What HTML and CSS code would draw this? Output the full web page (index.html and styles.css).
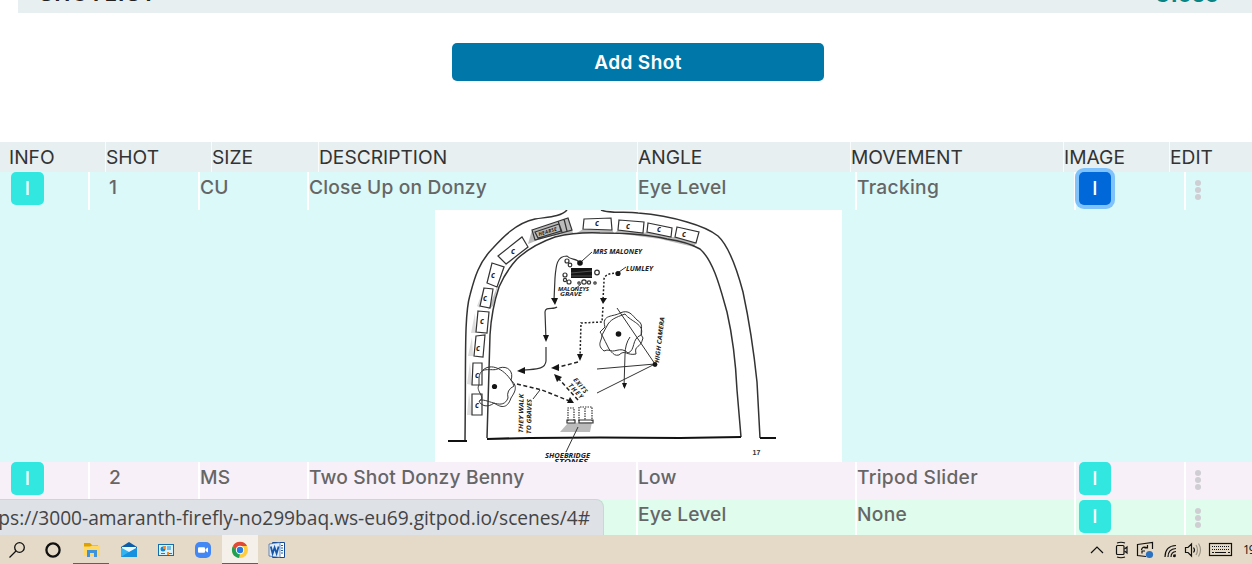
FILE: index.html
```html
<!DOCTYPE html>
<html lang="en">
<head>
<meta charset="utf-8">
<title>Shotlist</title>
<link rel="stylesheet" href="styles.css">
</head>
<body>
<div class="screen">
  <main class="page">
    <header class="title-bar"><span class="title">SHOTLIST</span><span class="close">Close</span></header>
    <div class="actions"><button class="add">Add Shot</button></div>
    <div class="head">
      <span>INFO</span><span>SHOT</span><span>SIZE</span><span>DESCRIPTION</span><span>ANGLE</span><span>MOVEMENT</span><span>IMAGE</span><span>EDIT</span>
    </div>
    <div class="row cyan">
      <div class="info"><b class="btn">I</b></div><div class="shot">1</div><div>CU</div><div class="desc">Close Up on Donzy</div><div class="angle">Eye Level</div><div class="move">Tracking</div><div class="image"><b class="btn active">I</b></div>
      <div class="edit"><i></i><i></i><i></i></div>
    </div>
    <div class="picture cyan">
      <svg class="plan" viewBox="435 210 407 252" width="407" height="252">
        <rect x="435" y="210" width="407" height="252" fill="#fff"/>
        <g class="shade">
          <path d="M532 230L528 244 Q548 235 573 233L572 230 535 240ZM583 229L577 233 614 233 612 230ZM618 230L615 233 660 239 694 247 696 243 675 237 671 237 647 232 643 233ZM506 264L498 285 493 306 488 310 497 287 504 267 528 247Z"/>
          <path d="M568 423L560 432 590 432 592 422ZM532 230L568 218 572 230 535 240Z"/>
          <path class="light" d="M486 283L477 306 480 308 484 288ZM475 313L471 333 476 333ZM472 337L468 356 473 356ZM470 362L467 384 472 385ZM469 392L467 415 472 415Z"/>
        </g>
        <g class="wall">
          <path d="M567 210C561 217 547 217 535 219C516 223 502 238 493 248C478 263 474 280 470 295C464 315 466 360 465 440"/>
          <path d="M601 210C610 214 626 211 638 213Q664 215 687 222Q708 228 718 236C731 248 739 277 743 292Q752 334 757 382L760 438"/>
          <path d="M487 438Q489 365 490 335C491 318 494 302 499 287Q506 271 517 259Q532 245 555 237Q576 232 600 233Q641 233 667 239Q688 242 700 249C714 261 721 291 727 312Q735 347 737 390L741 437"/>
          <path class="ground" d="M448 441H467M487 439L530 438 600 437.5 680 438 741 437M760 438H776"/>
        </g>
        <g class="ink">
          <path d="M532 230L568 218 572 230 535 240ZM558 221L562 232M564 219L567 231M535 232L559 224 561 231 538 238Z"/>
          <path d="M584 219L611 218 612 230 583 229ZM619 220L644 222 643 233 618 230ZM648 223L672 228 671 237 647 232ZM677 227L699 232 696 243 675 237ZM498 256L522 237 528 247 506 264ZM492 263L504 267 497 287 487 283ZM484 288L493 289 490 308 480 306ZM478 311L489 312 487 333 476 332ZM476 336L485 335 483 357 474 356ZM473 363L482 363 482 385 472 385ZM472 394L482 394 482 415 472 415Z"/>
          <path class="thin" d="M479 378C480 364 494 373 499 368C508 365 514 372 511 380C519 387 514 393 511 398C507 410 500 407 494 403C488 408 481 406 479 401C487 398 475 391 479 385ZM483 370C493 361 509 373 514 386Q506 390 508 398C503 411 489 399 480 400"/>
          <path class="thin" d="M605 327C601 314 614 317 620 313C629 309 632 315 637 320C646 325 638 332 643 338C640 350 634 344 636 354C627 356 625 349 619 355C611 357 613 347 604 351C594 343 606 339 600 332ZM608 324C612 318 620 316 625 314C631 322 645 324 641 335C631 339 636 350 628 353C620 345 613 355 609 349Q605 341 602 335Z"/>
          <path d="M580 263C576 257 571 261 567 256C557 256 556 265 555 278L554 300M557 307C554 310 545 306 545 312L546 340M546 347L546 361C545 372 529 368 519 371"/>
          <path class="thin" d="M655 364L597 369M655 364L597 393M655 364L617 308M630 337Q625 344 625 355L624 387M582 261L592 252M619 272L626 267M581 284L573 291M578 427L566 452M540 390L533 399"/>
          <path class="dash fine" d="M618 273Q603 273 604 281L603 300M603 307L602 322 581 323 580 358"/>
          <path class="dash" d="M578 362L555 368M517 384L542 390 572 402M578 400L558 378"/>
          <path class="dot-line" d="M568 421V408H574V421M579 421V407H592V421M585 408V420"/>
          <path d="M567 420H575V423H567ZM579 420H593V423H579Z"/>
        </g>
        <path class="stone" d="M571 268H592V278H571Z"/>
        <path d="M571 273L592 271M571 276H592" stroke="#777" stroke-width=".6"/>
        <g class="solid">
          <circle cx="580" cy="263" r="2.8"/><circle cx="618" cy="273.500" r="2.600"/><circle cx="618.500" cy="334" r="2.800"/><circle cx="494.500" cy="386.500" r="2.600"/><circle cx="655" cy="364.500" r="2.400"/>
          <path d="M551 298H558L555 305ZM600 298H607L603 304ZM543 335H549L546 342ZM577 354H583L580 361ZM517 371L525 367 525 374ZM551 368L559 364 559 371ZM554 374L562 377 557 382ZM574 403L567 403 570 397ZM622 383H627L624.500 389Z"/>
        </g>
        <g class="ink"><circle cx="567" cy="261" r="2"/><circle cx="570" cy="265" r="1.800"/><circle cx="565" cy="275" r="2"/><circle cx="565" cy="280" r="1.600"/><circle cx="569" cy="282" r="2"/><circle cx="597" cy="272.500" r="2.300"/><circle cx="579" cy="283" r="1.200"/><circle cx="584" cy="282" r="2.200"/><circle cx="589" cy="282.500" r="1.600"/><circle cx="595" cy="283" r="1.200"/></g>
        <g class="hand car">
          <text x="595" y="226">c</text><text x="626" y="229">c</text><text x="657" y="232">c</text><text x="682" y="237">c</text><text x="511" y="254">c</text><text x="491" y="278">c</text><text x="483" y="301">c</text><text x="480" y="324">c</text><text x="476" y="351">c</text><text x="475" y="378">c</text><text x="475" y="408">c</text>
        </g>
        <g class="hand">
          <text x="593" y="254" textLength="49" lengthAdjust="spacingAndGlyphs">MRS MALONEY</text>
          <text x="626" y="271" textLength="27" lengthAdjust="spacingAndGlyphs">LUMLEY</text>
          <text class="small" x="558" y="290.500" textLength="31" lengthAdjust="spacingAndGlyphs">MALONEYS</text><text class="small" x="560" y="295.500" textLength="22" lengthAdjust="spacingAndGlyphs">GRAVE</text>
          <text class="small" transform="translate(539 236) rotate(-17)" textLength="19">HEARSE</text>
          <text transform="translate(523 433) rotate(-89)" textLength="39" lengthAdjust="spacingAndGlyphs">THEY WALK</text>
          <text transform="translate(531 434) rotate(-89)" textLength="35" lengthAdjust="spacingAndGlyphs">TO GRAVES</text>
          <text transform="translate(659 363) rotate(-83)" textLength="46" lengthAdjust="spacingAndGlyphs">HIGH CAMERA</text>
          <text transform="translate(568 386) rotate(46)" textLength="18">THEY</text><text transform="translate(573 380) rotate(50)" textLength="18">EXITS</text>
          <text x="545" y="457.500" textLength="45" lengthAdjust="spacingAndGlyphs">SHOEBRIDGE</text><text x="554" y="464" textLength="34" lengthAdjust="spacingAndGlyphs">STONES</text>
        </g>
        <text class="num" x="752.500" y="454.500">17</text>
      </svg>
    </div>
    <div class="row pink">
      <div class="info"><b class="btn">I</b></div><div class="shot">2</div><div>MS</div><div class="desc">Two Shot Donzy Benny</div><div class="angle">Low</div><div class="move">Tripod Slider</div><div class="image"><b class="btn">I</b></div>
      <div class="edit"><i></i><i></i><i></i></div>
    </div>
    <div class="row mint">
      <div class="info"></div><div class="shot"></div><div></div><div class="desc"></div><div class="angle">Eye Level</div><div class="move">None</div><div class="image"><b class="btn">I</b></div>
      <div class="edit"><i></i><i></i><i></i></div>
    </div>
    <div class="status"><span>ps://3000-amaranth-firefly-no299baq.ws-eu69.gitpod.io/scenes/4#</span></div>
  </main>
  <footer class="taskbar">
    <div class="apps">
      <span class="app"><svg width="18" height="18" viewBox="0 0 18 18" fill="none" stroke="#111" stroke-width="1.300"><circle cx="11.500" cy="6.500" r="4.800"/><path d="M8 10L1.500 16.500"/></svg></span>
      <span class="app"><svg width="18" height="18" viewBox="0 0 18 18" fill="none" stroke="#111" stroke-width="2.300"><circle cx="9" cy="9" r="6.600"/></svg></span>
      <span class="app open"><svg width="18" height="18" viewBox="0 0 18 18"><path d="M2 2H8L10 4H16V8H2Z" fill="#dca000"/><path d="M2 5.500H8L10 4.500H18V15H2Z" fill="#ffd866"/><path d="M5 16V9H15V16H12V12H8V16Z" fill="#3f92dc"/></svg></span>
      <span class="app"><svg width="18" height="18" viewBox="0 0 18 18"><path d="M2 6L10 1 18 6V9H2Z" fill="#0b5cab"/><path d="M3 6H17V11H3Z" fill="#e9f7ff"/><path d="M2 6.500L11 11.500 18 16H2Z" fill="#32b3f1"/><path d="M2 16L10 11 18 6.500V16Z" fill="#1690df"/></svg></span>
      <span class="app"><svg width="18" height="18" viewBox="0 0 18 18"><rect x="2.500" y="3.500" width="15" height="11" fill="#d7f2fc" stroke="#126eaa"/><circle cx="7" cy="8" r="2.500" fill="#1685cb"/><path d="M7 8V5H10Q10 7 9 8Z" fill="#f18b27"/><path d="M11 6H15M11 8H15M5 12.500H9M11 12.500H16" stroke="#1685cb" stroke-width="1.200"/><path d="M11 11H13V14H11Z" fill="#f18b27"/></svg></span>
      <span class="app"><svg width="18" height="18" viewBox="0 0 18 18"><rect x="1" y="1" width="16" height="16" rx="5" fill="#4387f5"/><rect x="4" y="6.300" width="7" height="5.500" rx="1" fill="#fff"/><path d="M11.500 8L14 6.500V11.500L11.500 10Z" fill="#fff"/></svg></span>
      <span class="app open current"><svg width="18" height="18" viewBox="0 0 18 18"><circle cx="9" cy="9" r="8" fill="#ffcd40"/><path d="M2 5A8 8 0 0 1 16 5H9L5.500 11Z" fill="#df4937"/><path d="M2 5L6 11 9 13 8 17A8 8 0 0 1 2 5Z" fill="#20a052"/><circle cx="9" cy="9" r="4.200" fill="#fff"/><circle cx="9" cy="9" r="3.200" fill="#277be5"/></svg></span>
      <span class="app"><svg width="18" height="18" viewBox="0 0 18 18"><path d="M4.500 1.500H16.500V16.500H4.500Z" fill="#fff" stroke="#164a92"/><path d="M13 4.500H15M13 7H15M13 9.500H15M13 12H15" stroke="#1c5caf"/><path d="M1 3L12 1.500V16.500L1 15Z" fill="#dfeafa" stroke="#2b62ac" stroke-width=".7"/><path d="M2.800 5.500L4.600 12.500 6.600 6.500 8.600 12.500 10.600 5.500" fill="none" stroke="#1757a7" stroke-width="1.800"/></svg></span>
    </div>
    <svg class="tray" width="172" height="29" viewBox="1080 535 172 29" fill="none" stroke="#111" stroke-width="1.200">
      <path d="M1091 553L1097 547 1103 553"/>
      <rect x="1116.500" y="545.500" width="7.500" height="9" rx="1"/><path d="M1124.500 549L1127 547V553L1124.500 551M1117 543Q1121 541.500 1125 543M1117 557Q1121 558.500 1125 557"/>
      <path d="M1137.500 544.500L1152.500 542.500V549M1137.500 544V555.500L1146 556.500M1141.500 550Q1142 546 1147 547.500M1147.500 545V548H1144.500M1142 553.500V551H1145"/><circle cx="1149.500" cy="554.500" r="3.600" fill="#2b72c0" stroke="none"/>
      <path d="M1165 557Q1165 546 1176 545.500M1168 557Q1168 549 1176 548.500M1171 557Q1171 552 1176 551.500M1174 557V555H1176"/><circle cx="1174.500" cy="556" r="1.300" fill="#111" stroke="none"/>
      <path d="M1185.500 547.500H1188L1191.500 544V556L1188 552.500H1185.500ZM1193.500 547.500Q1195.500 550 1193.500 552.500"/><path stroke="#9c9587" d="M1196 545Q1199 550 1196 555M1198.500 543.500Q1202.500 550 1198.500 556.500"/>
      <rect x="1209.500" y="543.500" width="22" height="12"/><path d="M1212 546.500H1230M1212 549.500H1230" stroke-dasharray="1 1"/><path d="M1212 552.500H1214M1215 552.500H1226M1228 552.500H1230"/>
      <text class="clock" x="1243" y="554" textLength="12.500">19</text>
    </svg>
  </footer>
</div>
</body>
</html>
```

FILE: styles.css
```css
* { box-sizing: border-box; }
body { margin: 0; overflow: hidden; background: #fff; font-family: Inter, sans-serif; }
.screen { display: flex; flex-direction: column; width: 1252px; height: 564px; overflow: hidden; }
.page { position: relative; height: 535px; overflow: hidden; }
.title-bar { display: flex; justify-content: space-between; align-items: flex-end; height: 13px; margin-left: 18px; padding: 0 33px 7px 21px; overflow: hidden; background: #e7eff1; line-height: 24px; }
.title { color: #222; font-size: 21px; font-weight: 700; letter-spacing: 1.7px; }
.close { color: #078484; font-size: 22px; font-weight: 700; letter-spacing: .7px; }
.actions { height: 129px; padding: 30px 0 0 452px; }
.add { display: block; width: 372px; height: 38px; padding: 1px 0 0; border: 0; border-radius: 5px; background: #0077a9; color: #fff; font: 600 19px/37px Inter, sans-serif; letter-spacing: .4px; }
.head { display: grid; grid-template-columns: 107px 106px 107px 319px 213px 213px 106px 107px; height: 30px; margin-left: -1px; background: #e7eff1; color: #333; font-size: 19.2px; line-height: 30px; }
.head span { border-right: 1px solid #fafcfc; }
.head span:first-child { padding-left: 10px; }
.row { display: grid; grid-template-columns: 90px 110px 109px 329px 219px 219px 110px 66px; height: 38px; color: #666; font-size: 19.2px; font-weight: 500; line-height: 31px; letter-spacing: .15px; }
.row > div { border-right: 2px solid #fff; white-space: nowrap; }
.row > div:last-child { border: 0; }
.row .info { padding-left: 11px; }
.row .shot { padding-left: 19px; }
.row .move { letter-spacing: .3px; }
.row .image { padding-left: 3px; }
.cyan { background: #dbf9f9; }
.pink { height: 37px; background: #f7f0f8; }
.mint { background: #dffcec; }
.mint .btn, .mint .edit { margin-top: 1px; }
.btn { display: block; width: 33px; height: 33px; border-radius: 5px; background: #33e7e1; color: #fff; font-size: 19px; font-weight: 500; line-height: 34px; text-align: center; }
.image .btn { width: 32px; }
.active { background: #0068d9; box-shadow: 0 0 0 4px #80c2fb; }
.edit { display: flex; flex-direction: column; gap: 1px; padding: 8px 0 0 9px; }
.edit i { width: 6px; height: 6px; border-radius: 50%; background: #ceced3; }
.picture { display: flex; height: 252px; padding-left: 435px; }
.plan { display: block; }
.wall, .ink { fill: none; stroke: #333; stroke-width: 1.2; }
.wall { stroke-width: 1.5; }
.ground { stroke: #111; stroke-width: 2.2; }
.ink .thin { stroke-width: 1; }
.ink .dash { stroke: #222; stroke-width: 1.5; stroke-dasharray: 4 2.5; }
.ink .fine { stroke-dasharray: 2 1.8; }
.ink .dot-line { stroke-dasharray: 1.5 1; }
.shade { fill: #bbb; }
.light { fill: #ddd; }
.stone, .solid { fill: #151515; }
.hand { fill: #222; font: italic 700 6.3px "Open Sans", sans-serif; }
.car { font-size: 8px; }
.small { font-size: 5px; }
.num { fill: #333; font: 700 7px "Liberation Sans", sans-serif; }
.status { position: absolute; left: 0; bottom: 0; display: flex; justify-content: flex-end; width: 604px; height: 36px; padding-right: 13px; overflow: hidden; border: 1px solid #c3dcd3; border-width: 1px 1px 0 0; border-radius: 0 8px 0 0; background: #dee1e6; color: #444; font: 19.15px/37px "Open Sans", sans-serif; white-space: nowrap; }
.taskbar { display: flex; justify-content: space-between; height: 29px; background: #e5dac7; }
.apps { display: flex; }
.app { display: flex; align-items: center; justify-content: center; width: 36px; margin-right: 1.33px; }
.app:first-child { width: 34px; }
.open { border-bottom: 1px solid #0078d7; padding-top: 1px; }
.current { background: #f5f0e9; }
.clock { fill: #111; stroke: none; font: 12px "Open Sans", sans-serif; }
```
